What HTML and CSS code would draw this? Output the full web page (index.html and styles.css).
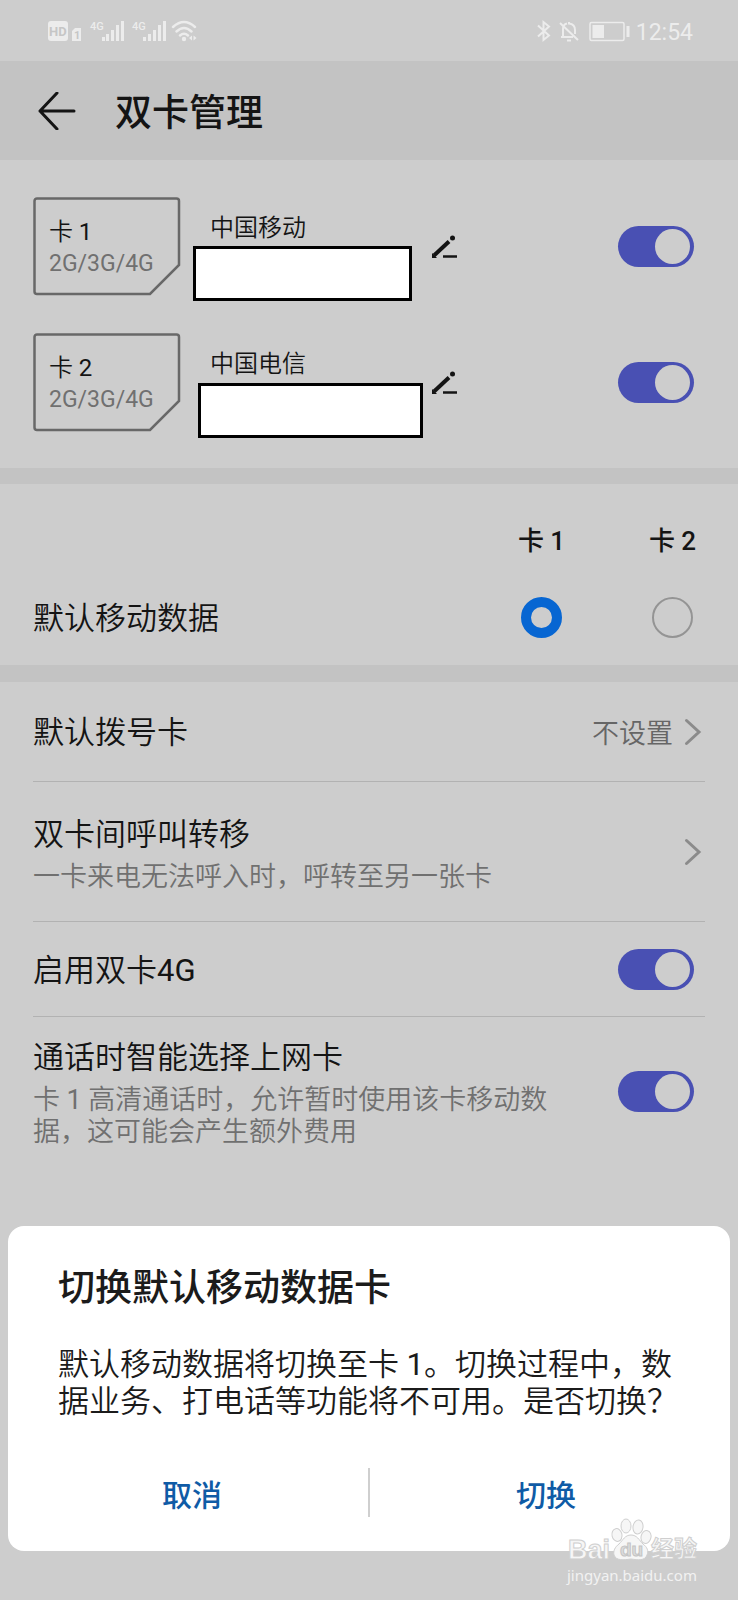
FILE: index.html
```html
<!DOCTYPE html>
<html lang="zh-CN">
<head>
<meta charset="utf-8">
<meta name="viewport" content="width=device-width, initial-scale=1">
<title>双卡管理</title>
<link rel="stylesheet" href="styles.css">
</head>
<body>
<div class="statusbar">
  <div class="status-group">
    <svg width="150" height="24" viewBox="0 0 150 24" fill="currentColor" aria-hidden="true">
      <path d="M3 2h14a3 3 0 0 1 3 3v14a3 3 0 0 1-3 3H3a3 3 0 0 1-3-3V5a3 3 0 0 1 3-3z"/>
      <text class="hd-text" x="1" y="17">HD</text>
      <path d="M27 9h6v13h-9V12z"/>
      <text class="hd-small" x="26" y="20">1</text>
      <text class="net-text" x="42" y="11">4G</text>
      <path d="M54 18h3v4h-3zM58 15h3v7h-3zM63 11h3v11h-3zM68 6h3v16h-3zM73 2h3v20h-3z"/>
      <text class="net-text" x="84" y="11">4G</text>
      <path d="M95 18h3v4h-3zM100 15h3v7h-3zM105 11h3v11h-3zM110 6h3v16h-3zM115 2h3v20h-3z"/>
      <g fill="none" stroke="currentColor" stroke-width="2.4" stroke-linecap="round">
        <path d="M125 8q11-10 22 0M128.500 12.500q7.500-7 15 0M132 16.500q4-3.500 8 0"/>
      </g>
      <circle cx="136" cy="20" r="2.200"/>
      <path d="M144 16.500v5l-3-2.500zM145.500 16.500v5l3-2.500z"/>
    </svg>
  </div>
  <div class="status-group">
    <svg width="94" height="24" viewBox="0 0 94 24" fill="none" stroke="currentColor" stroke-width="2" aria-hidden="true">
      <path d="M1 6.500l11 10-5.500 4.500V3L12 7.500 1 17.500"/>
      <path d="M26 17V10c0-3 2-5 4-5.500M32 3v1.500c4 .5 6 3 6 6.500v4M24 18h12M23 4l18 17M30 21.500h4"/>
      <rect x="53" y="3.500" width="34" height="18" rx="1.500" stroke-width="1.500"/>
      <path d="M55.500 6H67v13H55.500z" fill="currentColor" stroke="none"/>
      <path d="M91 7v11" stroke-width="3"/>
    </svg>
    <span class="clock">12:54</span>
  </div>
</div>

<header class="header">
  <button class="back" type="button" aria-label="返回">
    <svg width="38" height="38" viewBox="0 0 38 38" fill="none" stroke="currentColor" stroke-width="3" stroke-linecap="round" stroke-linejoin="round"><path d="M19 1L2 19l17 18M2 19h34"/></svg>
  </button>
  <h1 class="title">双卡管理</h1>
</header>

<main>
  <section class="sims">
    <div class="sim">
      <div class="sim-card">
        <svg class="sim-shape" width="148" height="99" viewBox="0 0 148 99" aria-hidden="true"><path d="M4 1.500h139.500a2.500 2.500 0 0 1 2.500 2.500v64L117 97H4A2.500 2.500 0 0 1 1.500 94.500V4A2.500 2.500 0 0 1 4 1.500z"/></svg>
        <div class="sim-slot">卡 <span class="latin">1</span></div>
        <div class="sim-net">2G/3G/4G</div>
      </div>
      <div class="sim-info">
        <div class="sim-name">中国移动</div>
        <div class="mask"></div>
      </div>
      <button class="edit" type="button" aria-label="编辑卡 1">
        <svg width="26" height="24" viewBox="0 0 26 24" fill="none" stroke="currentColor"><path d="M2 20.500L17 6.500" stroke-width="4"/><path d="M0 18v5h5z" fill="currentColor" stroke="none"/><circle cx="20.500" cy="3" r="2.500" fill="currentColor" stroke="none"/><path d="M11 21.500h14" stroke-width="2.500"/></svg>
      </button>
      <input class="switch" type="checkbox" role="switch" checked aria-label="卡 1">
    </div>
    <div class="sim">
      <div class="sim-card">
        <svg class="sim-shape" width="148" height="99" viewBox="0 0 148 99" aria-hidden="true"><path d="M4 1.500h139.500a2.500 2.500 0 0 1 2.500 2.500v64L117 97H4A2.500 2.500 0 0 1 1.500 94.500V4A2.500 2.500 0 0 1 4 1.500z"/></svg>
        <div class="sim-slot">卡 <span class="latin">2</span></div>
        <div class="sim-net">2G/3G/4G</div>
      </div>
      <div class="sim-info">
        <div class="sim-name">中国电信</div>
        <div class="mask mask-wide"></div>
      </div>
      <button class="edit" type="button" aria-label="编辑卡 2">
        <svg width="26" height="24" viewBox="0 0 26 24" fill="none" stroke="currentColor"><path d="M2 20.500L17 6.500" stroke-width="4"/><path d="M0 18v5h5z" fill="currentColor" stroke="none"/><circle cx="20.500" cy="3" r="2.500" fill="currentColor" stroke="none"/><path d="M11 21.500h14" stroke-width="2.500"/></svg>
      </button>
      <input class="switch" type="checkbox" role="switch" checked aria-label="卡 2">
    </div>
  </section>

  <section class="data">
    <label class="data-head data-first" for="data1">卡 1</label>
    <label class="data-head" for="data2">卡 2</label>
    <div class="label">默认移动数据</div>
    <input class="radio" type="radio" name="data" id="data1" checked>
    <input class="radio" type="radio" name="data" id="data2">
  </section>

  <section class="list">
    <a class="row row-dial" href="#dial">
      <span class="label">默认拨号卡</span>
      <span class="value">不设置</span>
      <svg class="chevron" width="18" height="28" viewBox="0 0 18 28"><path d="M2.500 2.500L15 14 2.500 25.500"/></svg>
    </a>
    <a class="row row-forward" href="#forward">
      <span class="text">
        <span class="label">双卡间呼叫转移</span>
        <span class="hint">一卡来电无法呼入时，呼转至另一张卡</span>
      </span>
      <svg class="chevron" width="18" height="28" viewBox="0 0 18 28"><path d="M2.500 2.500L15 14 2.500 25.500"/></svg>
    </a>
    <div class="row row-dual">
      <label class="label" for="dual4g">启用双卡<span class="latin">4G</span></label>
      <input class="switch" type="checkbox" role="switch" id="dual4g" checked>
    </div>
    <div class="row row-smart">
      <label class="text" for="smart">
        <span class="label">通话时智能选择上网卡</span>
        <span class="hint">卡 <span class="latin">1</span> 高清通话时，允许暂时使用该卡移动数据，这可能会产生额外费用</span>
      </label>
      <input class="switch" type="checkbox" role="switch" id="smart" checked>
    </div>
  </section>
</main>

<div class="dialog" role="dialog" aria-labelledby="dialog-title">
  <h2 class="dialog-title" id="dialog-title">切换默认移动数据卡</h2>
  <p class="dialog-text">默认移动数据将切换至卡 <span class="latin">1</span>。切换过程中，数据业务、打电话等功能将不可用。是否切换？</p>
  <div class="actions">
    <button class="action" type="button">取消</button>
    <span class="divider"></span>
    <button class="action" type="button">切换</button>
  </div>
</div>

<div class="watermark">
  <svg class="wm-logo" width="132" height="46" viewBox="0 0 132 46" aria-hidden="true">
    <text class="wm-latin" x="1" y="41">Bai</text>
    <g class="wm-paw">
      <ellipse cx="50" cy="17" rx="5" ry="6.500" transform="rotate(-12 50 17)"/>
      <ellipse cx="59" cy="8" rx="5" ry="7"/>
      <ellipse cx="71" cy="9" rx="5" ry="7" transform="rotate(8 71 9)"/>
      <ellipse cx="79" cy="19" rx="5" ry="6.500" transform="rotate(14 79 19)"/>
      <path d="M64 17c6 0 8 5 12 9 4 3 6 7 4 11-2 6-9 5-16 4-7 1-15 2-17-4-1-4 1-8 5-11 4-4 6-9 12-9z"/>
    </g>
    <text class="wm-du" x="53" y="38">du</text>
    <text class="wm-cn" x="84" y="39">经验</text>
  </svg>
  <span class="wm-url">jingyan.baidu.com</span>
</div>
</body>
</html>
```
FILE: styles.css
```css
* { box-sizing: border-box; }

body {
  margin: 0;
  min-height: 100vh;
  position: relative;
  background: #cdcdcd;
  color: #141414;
  font-family: Roboto, "Noto Sans CJK SC", sans-serif;
  font-weight: 350;
}

button {
  padding: 0;
  border: 0;
  background: none;
  color: inherit;
  font: inherit;
}

svg { display: block; }

.latin { font-weight: 400; }

.statusbar {
  display: flex;
  justify-content: space-between;
  align-items: center;
  height: 61px;
  padding: 0 45px 0 48px;
  color: #ececec;
}

.status-group {
  display: flex;
  align-items: center;
  gap: 5px;
}

.hd-text {
  font-size: 13px;
  font-weight: 700;
  fill: #c6c6c6;
}

.hd-small {
  font-size: 11px;
  font-weight: 700;
  fill: #c6c6c6;
}

.net-text {
  font-size: 11px;
  font-weight: 500;
}

.clock {
  padding-top: 3px;
  font-size: 23px;
  font-weight: 400;
}

.header {
  display: flex;
  align-items: center;
  gap: 39px;
  height: 99px;
  padding: 0 38px;
  background: #c3c3c3;
}

.title {
  margin: 0;
  padding-top: 7px;
  font-size: 37px;
  line-height: 48px;
  font-weight: 500;
}

.sims {
  display: flex;
  flex-direction: column;
  gap: 37px;
  padding: 37px 44px 36px 33px;
}

.sim {
  display: flex;
  align-items: center;
}

.sim-card {
  position: relative;
  width: 148px;
  height: 99px;
  padding: 19px 16px;
}

.sim-shape {
  position: absolute;
  inset: 0;
  fill: none;
  stroke: #686868;
  stroke-width: 2.5;
}

.sim-slot {
  font-size: 24px;
  line-height: 32px;
}

.sim-net {
  font-size: 23px;
  line-height: 32px;
  color: #707070;
  font-weight: 400;
}

.sim-info {
  align-self: flex-start;
  width: 239px;
  margin: 0 0 -8px 12px;
  padding-top: 14px;
}

.sim-name {
  padding-left: 17px;
  font-size: 24px;
  line-height: 35px;
}

.mask {
  width: 219px;
  height: 55px;
  border: 3px solid #000;
  background: #fff;
}

.mask-wide {
  width: 225px;
  margin: 1px 0 0 5px;
}

.edit { margin-right: auto; }

.switch {
  appearance: none;
  flex: none;
  display: flex;
  justify-content: flex-end;
  align-items: center;
  width: 76px;
  height: 41px;
  margin: 0;
  padding: 0 4px;
  border-radius: 21px;
  background: #4950b3;
}

.switch::before {
  content: "";
  width: 35px;
  height: 35px;
  border-radius: 50%;
  background: #cdcdcd;
}

.data {
  display: grid;
  grid-template-columns: 1fr 131px 131px;
  align-items: center;
  justify-items: center;
  row-gap: 35px;
  height: 214px;
  padding: 38px 0 26px 33px;
  border: solid #c3c3c3;
  border-width: 16px 0 17px;
}

.data-head {
  font-size: 26px;
  line-height: 38px;
  font-weight: 500;
}

.data-first { grid-column: 2; }

.data .label { justify-self: start; }

.radio {
  appearance: none;
  width: 41px;
  height: 41px;
  margin: 0;
  border: 2px solid #949494;
  border-radius: 50%;
}

.radio:checked { border: 10px solid #0766d2; }

.label {
  padding-top: 3px;
  font-size: 31px;
  line-height: 42px;
}

.list { padding: 0 33px; }

.row {
  display: flex;
  align-items: center;
  border-bottom: 1px solid #b2b2b2;
  color: inherit;
  text-decoration: none;
}

.row:last-child { border-bottom: 0; }

.row > .label { flex: 1; }

.row .switch { margin-right: 11px; }

.row-dial { height: 100px; }
.row-forward { height: 140px; }
.row-dual { height: 95px; }
.row-smart { height: 148px; }

.text {
  flex: 1;
  display: flex;
  flex-direction: column;
  padding-right: 60px;
}

.row-forward .text { padding-right: 0; }

.hint {
  font-size: 27px;
  line-height: 32px;
  padding-top: 5px;
  color: #707070;
}

.value {
  margin-right: 11px;
  font-size: 27px;
  color: #666;
}

.chevron {
  flex: none;
  margin-right: 3px;
  fill: none;
  stroke: #8b8b8b;
  stroke-width: 3;
  stroke-linecap: round;
}

.dialog {
  position: absolute;
  left: 8px;
  right: 8px;
  bottom: 49px;
  padding: 38px 8px 34px;
  border-radius: 16px;
  background: #fff;
  color: #1b1b1b;
}

.dialog-title {
  margin: 0 42px;
  font-size: 37px;
  line-height: 50px;
  font-weight: 500;
}

.dialog-text {
  margin: 32px 42px 48px;
  font-size: 31px;
  line-height: 37px;
}

.actions {
  display: flex;
  align-items: center;
}

.action {
  flex: 1;
  height: 49px;
  color: #0f5ba6;
  font-size: 30px;
  font-weight: 500;
}

.divider {
  width: 2px;
  height: 49px;
  background: #cfcfcf;
}

.watermark {
  position: absolute;
  right: 39px;
  bottom: 14px;
  display: flex;
  flex-direction: column;
  color: #f2f2f2;
}

.wm-logo { overflow: visible; }

.wm-latin,
.wm-cn,
.wm-du,
.wm-paw {
  fill: #f6f6f6;
  stroke: #cfcfcf;
  stroke-width: 1;
}

.wm-latin {
  font: 700 27px "Liberation Sans", sans-serif;
}

.wm-du {
  font: 700 19px "Liberation Sans", sans-serif;
  fill: #dcdcdc;
  stroke: #c4c4c4;
}

.wm-cn {
  font-size: 23px;
  font-weight: 700;
}

.wm-url {
  font: 400 15px/22px "Noto Sans", sans-serif;
}
```
